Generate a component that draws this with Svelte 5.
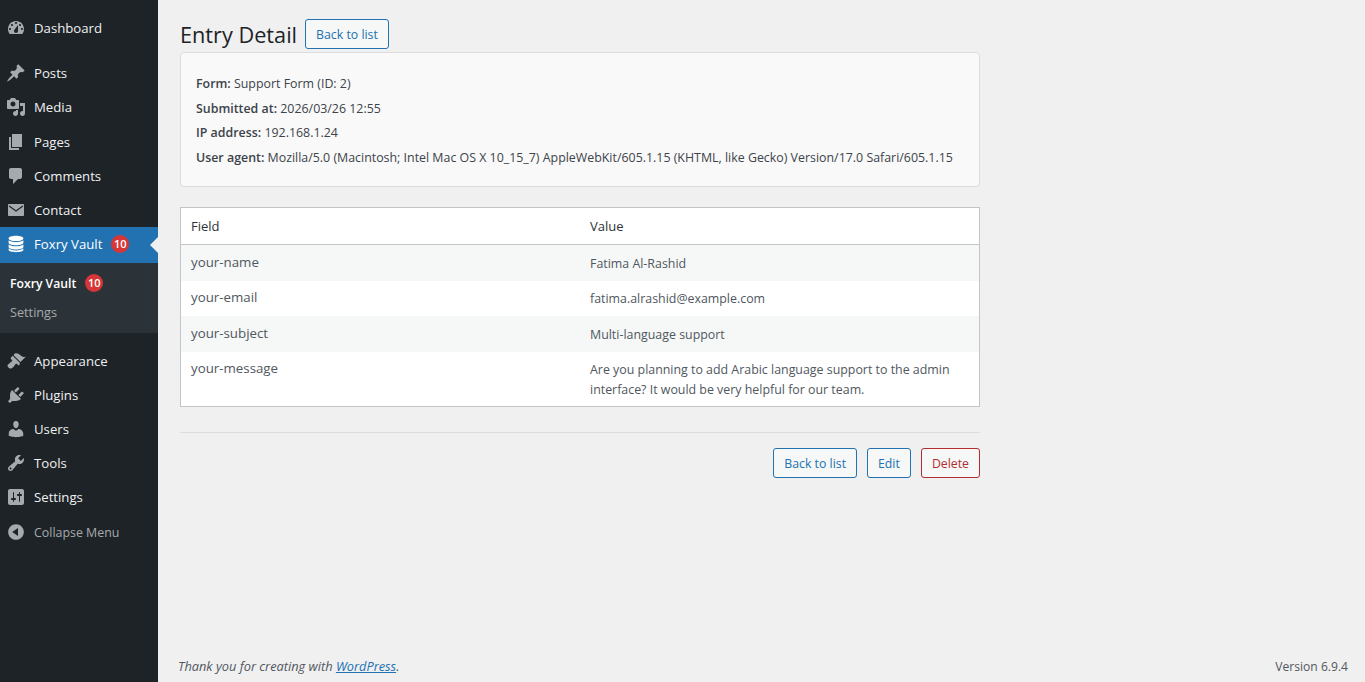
<script lang="ts">
  const icons: Record<string, string> = {
    dashboard: 'M3.76 16h12.48c1.1-1.37 1.76-3.11 1.76-5 0-4.42-3.58-8-8-8s-8 3.58-8 8c0 1.89.66 3.63 1.76 5zM10 4c.55 0 1 .45 1 1s-.45 1-1 1-1-.45-1-1 .45-1 1-1zM6 6c.55 0 1 .45 1 1s-.45 1-1 1-1-.45-1-1 .45-1 1-1zm8 0c.55 0 1 .45 1 1s-.45 1-1 1-1-.45-1-1 .45-1 1-1zm-5.37 5.55L12 7v6c0 1.1-.9 2-2 2s-2-.9-2-2c0-.57.24-1.08.63-1.45zM4 10c.55 0 1 .45 1 1s-.45 1-1 1-1-.45-1-1 .45-1 1-1zm12 0c.55 0 1 .45 1 1s-.45 1-1 1-1-.45-1-1 .45-1 1-1z',
    post: 'M10.44 3.02l1.82-1.82 6.36 6.35-1.83 1.82c-1.05-.68-2.48-.57-3.41.36l-.75.75c-.92.93-1.04 2.35-.35 3.41l-1.83 1.82-2.41-2.41-2.8 2.79c-.42.42-3.38 2.71-3.8 2.29s1.86-3.39 2.28-3.81l2.79-2.79L4.1 9.36l1.83-1.82c1.05.69 2.48.57 3.4-.36l.75-.75c.93-.92 1.05-2.35.36-3.41z',
    media: 'M13 11V4c0-.55-.45-1-1-1h-1.67L9 1H5L3.67 3H2c-.55 0-1 .45-1 1v7c0 .55.45 1 1 1h10c.55 0 1-.45 1-1zM7 4.5c1.38 0 2.5 1.12 2.5 2.5S8.38 9.5 7 9.5 4.5 8.38 4.5 7 5.62 4.5 7 4.5zM14 6h5v10.5c0 1.38-1.12 2.5-2.5 2.5S14 17.88 14 16.5s1.12-2.5 2.5-2.5c.17 0 .34.02.5.05V9h-3V6zm-4 8.05V13h2v3.5c0 1.38-1.12 2.5-2.5 2.5S7 17.88 7 16.5 8.12 14 9.5 14c.17 0 .34.02.5.05z',
    page: 'M6 15V2h10v13H6zm-1 1h8v2H3V5h2v11z',
    comments: 'M5 2h9c1.1 0 2 .9 2 2v7c0 1.1-.9 2-2 2h-2l-5 5v-5H5c-1.1 0-2-.9-2-2V4c0-1.1.9-2 2-2z',
    email: 'M3 4h14c.6 0 1 .4 1 1v10c0 .6-.4 1-1 1H3c-.6 0-1-.4-1-1V5c0-.6.4-1 1-1zM3.5 5.5L2.800 6.5 10 11.7l7.200-5.200-.7-1L10 10.2z',
    database: 'M10 1.800c4.100 0 7.400 1.100 7.400 2.600S14.100 7 10 7 2.600 5.900 2.600 4.400 5.900 1.800 10 1.800zM2.600 6.200C4 7.400 6.800 8 10 8s6-.6 7.400-1.800v2.600c0 1.400-3.300 2.500-7.400 2.500s-7.400-1.100-7.400-2.500V6.200zM2.600 10.500c1.400 1.200 4.200 1.800 7.400 1.800s6-.6 7.400-1.800v2.500c0 1.400-3.300 2.500-7.400 2.500s-7.400-1.100-7.400-2.500v-2.500zM2.600 14.600c1.400 1.200 4.200 1.800 7.400 1.800s6-.6 7.400-1.800v1.200c0 1.400-3.300 2.400-7.400 2.400s-7.400-1-7.400-2.400v-1.200z',
    appearance: 'M14.48 11.060L7.41 3.990l1.500-1.500c.5-.56 2.300-.47 3.510.32 1.210.8 1.430 1.280 2.910 2.100 1.180.64 2.450 1.260 4.450.85zm-.71.71L6.700 4.700 4.930 6.470c-.39.39-.39 1.020 0 1.410l1.060 1.060c.39.39.39 1.030 0 1.420-.6.6-1.430 1.110-2.210 1.690-.35.26-.7.53-1.010.84C1.430 13.230.99 15.200 2.400 16.600s3.370.96 4.720-.4c.31-.31.58-.66.84-1.010.58-.78 1.090-1.610 1.690-2.210.39-.39 1.030-.39 1.420 0l1.060 1.060c.39.39 1.020.39 1.410 0z',
    plugins: 'M13.110 4.360L9.870 7.600 8 5.730l3.240-3.240c.35-.34 1.050-.2 1.560.32.52.51.66 1.210.31 1.550zm-8 1.770l.91-1.120 9.010 9.010-1.190.84c-.71.71-2.630 1.160-3.820 1.160H6.140L4.900 17.260c-.59.59-1.540.59-2.120 0-.59-.58-.59-1.530 0-2.120l1.240-1.240v-3.880c0-1.130.4-3.190 1.090-3.890zm7.260 3.970l3.240-3.240c.34-.35 1.040-.21 1.550.31.52.51.66 1.210.31 1.550l-3.240 3.250z',
    users: 'M10 9.250c-2.270 0-2.730-3.440-2.730-3.440C7 4.020 7.820 2 9.970 2c2.160 0 2.980 2.020 2.710 3.810 0 0-.41 3.440-2.680 3.440zm0 2.570L12.720 10c2.390 0 4.520 2.330 4.520 4.530v2.490s-3.650 1.130-7.240 1.130c-3.650 0-7.240-1.130-7.240-1.130v-2.490c0-2.250 1.940-4.480 4.470-4.480z',
    tools: 'M16.680 9.770c-1.340 1.340-3.300 1.670-4.950.99l-5.410 6.520c-.99.99-2.590.99-3.580 0s-.99-2.590 0-3.570l6.520-5.420c-.68-1.650-.35-3.610.99-4.950 1.280-1.280 3.120-1.620 4.720-1.060l-2.890 2.890 2.820 2.820 2.860-2.870c.53 1.580.18 3.390-1.080 4.650zM3.810 16.210c.4.39 1.040.39 1.430 0 .4-.4.4-1.040 0-1.430-.39-.4-1.030-.4-1.430 0-.39.39-.39 1.030 0 1.430z',
    settings: 'M18 16V4c0-1.100-.9-2-2-2H4c-1.100 0-2 .9-2 2v12c0 1.100.9 2 2 2h12c1.100 0 2-.9 2-2zM8 11h1c.55 0 1 .45 1 1s-.45 1-1 1H8v1.500c0 .28-.22.5-.5.5s-.5-.22-.5-.5V13H6c-.55 0-1-.45-1-1s.45-1 1-1h1V5.500c0-.28.22-.5.5-.5s.5.22.5.5V11zm5-2h-1c-.55 0-1-.45-1-1s.45-1 1-1h1V5.500c0-.28.22-.5.5-.5s.5.22.5.5V7h1c.55 0 1 .45 1 1s-.45 1-1 1h-1v5.500c0 .28-.22.5-.5.5s-.5-.22-.5-.5V9z',
    collapse: 'M10 2.160c4.330 0 7.840 3.510 7.840 7.840s-3.510 7.840-7.840 7.840S2.160 14.330 2.160 10 5.710 2.160 10 2.160zm2 11.720V6.120L6.180 9.970z'
  }

  const topItems = [{ label: 'Dashboard', icon: 'dashboard' }]
  const midItems = [
    { label: 'Posts', icon: 'post' },
    { label: 'Media', icon: 'media' },
    { label: 'Pages', icon: 'page' },
    { label: 'Comments', icon: 'comments' },
    { label: 'Contact', icon: 'email' }
  ]
  const lowItems = [
    { label: 'Appearance', icon: 'appearance' },
    { label: 'Plugins', icon: 'plugins' },
    { label: 'Users', icon: 'users' },
    { label: 'Tools', icon: 'tools' },
    { label: 'Settings', icon: 'settings' }
  ]
  const rows = [
    { field: 'your-name', value: 'Fatima Al-Rashid' },
    { field: 'your-email', value: 'fatima.alrashid@example.com' },
    { field: 'your-subject', value: 'Multi-language support' },
    {
      field: 'your-message',
      value: 'Are you planning to add Arabic language support to the admin interface? It would be very helpful for our team.'
    }
  ]
</script>

{#snippet icon(name: string)}
  <svg class="icon" viewBox="0 0 20 20" aria-hidden="true"><path fill-rule="evenodd" d={icons[name]} /></svg>
{/snippet}

{#snippet item(it: { label: string; icon: string })}
  <a class="item" href="#top">{@render icon(it.icon)}<span>{it.label}</span></a>
{/snippet}

<div class="shell">
  <nav class="menu">
    <div class="group first">
      {#each topItems as it}{@render item(it)}{/each}
    </div>
    <div class="group">
      {#each midItems as it}{@render item(it)}{/each}
    </div>
    <a class="item current" href="#top">
      {@render icon('database')}<span>Foxry Vault</span><b class="count">10</b>
    </a>
    <div class="submenu">
      <a class="sub active" href="#top">Foxry Vault <b class="count">10</b></a>
      <a class="sub" href="#top">Settings</a>
    </div>
    <div class="group low">
      {#each lowItems as it}{@render item(it)}{/each}
      <button class="item collapse">{@render icon('collapse')}<span>Collapse Menu</span></button>
    </div>
  </nav>

  <div class="main">
    <div class="content">
      <header class="head">
        <h1>Entry Detail</h1>
        <a class="btn" href="#top">Back to list</a>
      </header>

      <section class="meta">
        <p><strong>Form:</strong> Support Form (ID: 2)</p>
        <p><strong>Submitted at:</strong> 2026/03/26 12:55</p>
        <p><strong>IP address:</strong> 192.168.1.24</p>
        <p><strong>User agent:</strong> Mozilla/5.0 (Macintosh; Intel Mac OS X 10_15_7) AppleWebKit/605.1.15 (KHTML, like Gecko) Version/17.0 Safari/605.1.15</p>
      </section>

      <table>
        <thead>
          <tr><th class="f">Field</th><th>Value</th></tr>
        </thead>
        <tbody>
          {#each rows as row}
            <tr><td class="f">{row.field}</td><td class="v">{row.value}</td></tr>
          {/each}
        </tbody>
      </table>

      <div class="actions">
        <a class="btn" href="#top">Back to list</a>
        <a class="btn" href="#top">Edit</a>
        <a class="btn danger" href="#top">Delete</a>
      </div>
    </div>

    <footer>
      <em>Thank you for creating with <a href="#top">WordPress</a>.</em>
      <span>Version 6.9.4</span>
    </footer>
  </div>
</div>

<style>
  :global(body) {
    background: #f0f0f1;
    font-family: 'Open Sans', 'Noto Sans', sans-serif;
    font-size: 12.4px;
    color: #3c434a;
  }
  a {
    text-decoration: none;
  }
  .shell {
    display: flex;
    min-height: 682px;
  }
  .menu {
    width: 158px;
    flex: none;
    background: #1d2327;
    display: flex;
    flex-direction: column;
  }
  .group.first {
    padding-top: 11px;
    margin-bottom: 11px;
  }
  .group.low {
    margin-top: 11px;
  }
  .item {
    box-sizing: border-box;
    display: flex;
    align-items: center;
    height: 34.2px;
    padding-left: 6px;
    color: #f0f0f1;
    background: none;
    border: 0;
    width: 100%;
    font-family: inherit;
    font-size: 13.2px;
  }
  .item span {
    margin-left: 8px;
  }
  .group.low .item {
    height: 34px;
  }
  .icon {
    width: 20px;
    height: 20px;
    flex: none;
    fill: #a7aaad;
  }
  .item.current {
    height: 36px;
    background: #2271b1;
    color: #fff;
    position: relative;
    padding-bottom: 2px;
  }
  .item.current .icon {
    fill: #fff;
  }
  .item.current::after {
    content: '';
    position: absolute;
    right: 0;
    top: 50%;
    margin-top: -8px;
    border: 8px solid transparent;
    border-right-color: #f0f0f1;
    border-left: 0;
  }
  .count {
    display: inline-block;
    min-width: 18px;
    height: 18px;
    line-height: 18px;
    border-radius: 9px;
    background: #d63638;
    color: #fff;
    font-size: 11px;
    font-weight: 600;
    text-align: center;
    margin-left: 9px;
  }
  .submenu {
    background: #2c3338;
    height: 70px;
    padding-top: 6px;
    box-sizing: border-box;
  }
  .sub {
    display: flex;
    align-items: center;
    height: 28px;
    padding-left: 10px;
    color: #a7aaad;
    font-size: 12.7px;
  }
  .sub.active {
    color: #fff;
    font-weight: 600;
    font-size: 12.2px;
  }
  .sub + .sub {
    margin-top: 1px;
  }
  .group.low .collapse {
    margin-top: 1px;
    color: #a7aaad;
    text-align: left;
    font-size: 12.4px;
  }
  .main {
    flex: 1;
    display: flex;
    flex-direction: column;
    min-width: 0;
  }
  .content {
    width: 800px;
    margin-left: 22px;
    padding-top: 19px;
  }
  .head {
    display: flex;
    align-items: center;
    gap: 8px;
    height: 30px;
  }
  h1 {
    margin: 0;
    font-size: 21.7px;
    font-weight: 400;
    color: #1d2327;
  }
  .btn {
    display: inline-block;
    box-sizing: border-box;
    height: 30px;
    line-height: 30px;
    padding: 0 10px;
    border: 1px solid #2271b1;
    border-radius: 3px;
    background: #f6f7f7;
    color: #2271b1;
    font-size: 12.3px;
  }
  .btn.danger {
    border-color: #b32d2e;
    color: #b32d2e;
    background: #f6f7f7;
  }
  .meta {
    box-sizing: border-box;
    height: 135px;
    margin-top: 3px;
    padding: 22px 15px 0;
    background: #f9f9f9;
    border: 1px solid #dcdcde;
    border-radius: 4px;
  }
  .meta p {
    margin: 0 0 7px;
    line-height: 17.5px;
  }
  strong {
    font-weight: 600;
  }
  table {
    width: 100%;
    margin-top: 20px;
    border-collapse: collapse;
    background: #fff;
    border: 1px solid #c3c4c7;
    table-layout: fixed;
  }
  th {
    text-align: left;
    font-weight: 400;
    font-size: 13px;
    color: #2c3338;
    height: 36px;
    padding: 0 10px;
    border-bottom: 1px solid #c3c4c7;
  }
  th.f,
  td.f {
    width: 379px;
  }
  td {
    padding: 8.5px 10px 7px;
    vertical-align: top;
    line-height: 20px;
    color: #50575e;
  }
  td.f {
    font-size: 13.3px;
    padding-top: 6.6px;
  }
  tbody tr:nth-child(odd) {
    background: #f6f7f7;
  }
  tbody tr:last-child td {
    padding-bottom: 6px;
  }
  .actions {
    margin-top: 25px;
    border-top: 1px solid #dcdcde;
    padding-top: 15px;
    display: flex;
    justify-content: flex-end;
    gap: 10px;
  }
  footer {
    margin-top: auto;
    height: 25px;
    padding: 0 17px 0 20px;
    display: flex;
    justify-content: space-between;
    color: #50575e;
  }
  footer em {
    font-size: 12.8px;
  }
  footer span {
    font-size: 12.1px;
    padding-top: 1px;
  }
  footer a {
    color: #2271b1;
    text-decoration: underline;
  }
</style>
